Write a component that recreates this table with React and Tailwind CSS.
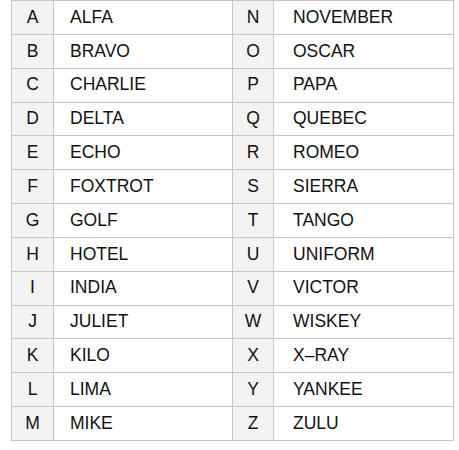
const LEFT = [
  ["A", "ALFA"], ["B", "BRAVO"], ["C", "CHARLIE"], ["D", "DELTA"], ["E", "ECHO"],
  ["F", "FOXTROT"], ["G", "GOLF"], ["H", "HOTEL"], ["I", "INDIA"], ["J", "JULIET"],
  ["K", "KILO"], ["L", "LIMA"], ["M", "MIKE"],
];
const RIGHT = [
  ["N", "NOVEMBER"], ["O", "OSCAR"], ["P", "PAPA"], ["Q", "QUEBEC"], ["R", "ROMEO"],
  ["S", "SIERRA"], ["T", "TANGO"], ["U", "UNIFORM"], ["V", "VICTOR"], ["W", "WISKEY"],
  ["X", "X\u2013RAY"], ["Y", "YANKEE"], ["Z", "ZULU"],
];

export default function App() {
  return (
    <div className="w-[459px] h-[450px] bg-white pl-[11px]" style={{ fontFamily: '"Liberation Sans", Arial, sans-serif' }}>
      <table className="border-collapse w-[442px] h-[441px] text-[17.5px] text-[#111] table-fixed">
        <colgroup>
          <col className="w-[42px]" />
          <col className="w-[179px]" />
          <col className="w-[41px]" />
          <col className="w-[180px]" />
        </colgroup>
        <tbody>
          {LEFT.map((l, i) => (
            <tr key={l[0]} className="h-[33.85px]">
              <td className="border border-[#c6c6c6] bg-[#f3f3f3] text-center p-0 leading-none">{l[0]}</td>
              <td className="border border-[#c6c6c6] pl-[16px] p-0 leading-none">{l[1]}</td>
              <td className="border border-[#c6c6c6] bg-[#f3f3f3] text-center p-0 leading-none">{RIGHT[i][0]}</td>
              <td className="border border-[#c6c6c6] pl-[19px] p-0 leading-none">{RIGHT[i][1]}</td>
            </tr>
          ))}
        </tbody>
      </table>
    </div>
  );
}
